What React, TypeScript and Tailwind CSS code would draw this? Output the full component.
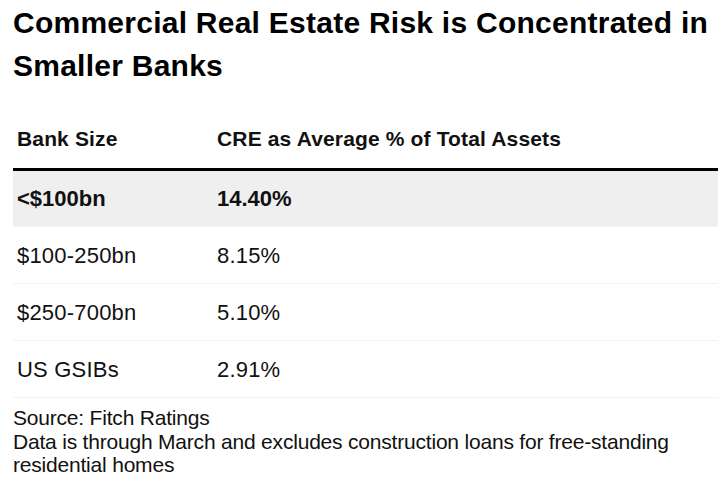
const ROWS = [
  { size: "<$100bn", value: "14.40%", highlight: true },
  { size: "$100-250bn", value: "8.15%" },
  { size: "$250-700bn", value: "5.10%" },
  { size: "US GSIBs", value: "2.91%" },
];

export default function App() {
  return (
    <div className="w-[727px] h-[484px] bg-white text-black font-['Liberation_Sans',Arial,sans-serif] px-[13px] pt-[1px] overflow-hidden">
      <h1 className="text-[30px] font-bold leading-[43px] tracking-[0.25px] text-black">
        Commercial Real Estate Risk is Concentrated in Smaller Banks
      </h1>

      <div className="mt-[31px] w-[705px]">
        {/* Header */}
        <div className="flex items-center h-[53px] border-b-[3px] border-black text-[21px] font-bold tracking-[0.15px] text-[#111] pb-[8px]">
          <div className="w-[204px] pl-[4px]">Bank Size</div>
          <div className="flex-1">CRE as Average % of Total Assets</div>
        </div>

        {/* Rows */}
        {ROWS.map(r => (
          <div
            key={r.size}
            className={
              r.highlight
                ? "flex items-center h-[55px] bg-[#efefef] text-[22px] font-bold text-[#111]"
                : "flex items-center h-[57px] border-t border-[#f3f3f3] text-[22px] tracking-[0.2px] text-[#111]"
            }
          >
            <div className="w-[204px] pl-[4px]">{r.size}</div>
            <div className="flex-1">{r.value}</div>
          </div>
        ))}
        <div className="border-t border-[#f3f3f3]" />
      </div>

      {/* Footnote */}
      <div className="mt-[8px] text-[21px] leading-[23.5px] tracking-[-0.2px] text-[#111]">
        <p>Source: Fitch Ratings</p>
        <p className="w-[680px]">Data is through March and excludes construction loans for free-standing residential homes</p>
      </div>
    </div>
  );
}
